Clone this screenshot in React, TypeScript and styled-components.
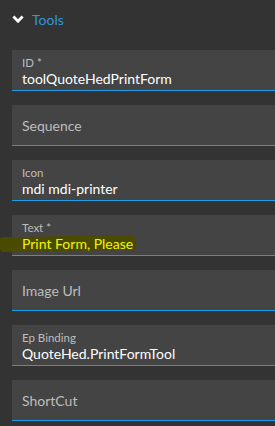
import React from 'react'
import styled, { createGlobalStyle } from 'styled-components'

const GlobalStyle = createGlobalStyle`
    html, body {
        margin: 0;
        padding: 0;
        background: #333333;
        font-family: Lato, "Liberation Sans", sans-serif;
    }
`

type Field = {
    label: string
    value?: string
    required?: boolean
    marked?: boolean
}

const fields: Field[] = [
    { label: 'ID', value: 'toolQuoteHedPrintForm', required: true },
    { label: 'Sequence' },
    { label: 'Icon', value: 'mdi mdi-printer' },
    { label: 'Text', value: 'Print Form, Please', required: true, marked: true },
    { label: 'Image Url' },
    { label: 'Ep Binding', value: 'QuoteHed.PrintFormTool' },
    { label: 'ShortCut' },
]

const Chevron = () => (
    <svg width="12" height="9" viewBox="0 0 12 9">
        <path d="M1.4 1.6 L6 6.2 L10.6 1.6" fill="none" stroke="#ffffff" strokeWidth="2.8" />
    </svg>
)

const App = () => {
    return (
        <Page>
            <GlobalStyle />
            <Header>
                <Chevron />
                <Title>Tools</Title>
            </Header>
            <List>
                {fields.map((f) => (
                    <FieldBox key={f.label}>
                        {f.value ? (
                            <>
                                <Label>{f.label}{f.required && ' *'}</Label>
                                <Value $marked={f.marked}>
                                    {f.marked && <Marker />}
                                    <span>{f.value}</span>
                                </Value>
                            </>
                        ) : (
                            <Placeholder>{f.label}</Placeholder>
                        )}
                    </FieldBox>
                ))}
            </List>
        </Page>
    )
}

const Page = styled.div`
    width: 275px;
    height: 426px;
    overflow: hidden;
    background: #333333;
`
const Header = styled.div`
    height: 39px;
    display: flex;
    align-items: center;
    gap: 8px;
    padding: 0 0 11px 12px;
    box-sizing: content-box;
`
const Title = styled.span`
    color: #2f96dc;
    font-size: 14px;
    line-height: 1;
`
const List = styled.div`
    display: flex;
    flex-direction: column;
    gap: 14px;
    padding-left: 12px;
`
const FieldBox = styled.div`
    height: 40px;
    background: #444444;
    border-bottom: 1px solid #1e9be6;
    padding: 0 10px;
    display: flex;
    flex-direction: column;
    justify-content: center;
`
const Label = styled.div`
    color: #bdbdbd;
    font-size: 11.5px;
    line-height: 13px;
    margin-top: 2px;
`
const Value = styled.div<{ $marked?: boolean }>`
    position: relative;
    color: ${(p) => (p.$marked ? '#f5f500' : '#ffffff')};
    font-size: 14px;
    line-height: 17px;
    margin-top: 1px;
    span {
        position: relative;
    }
`
const Marker = styled.div`
    position: absolute;
    left: -22px;
    top: 1px;
    width: 136px;
    height: 15px;
    background: #4b4b00;
    border-radius: 2px 6px 3px 4px;
    transform: skewY(-1deg);
`
const Placeholder = styled.div`
    color: #bdbdbd;
    font-size: 14px;
`

export default App
